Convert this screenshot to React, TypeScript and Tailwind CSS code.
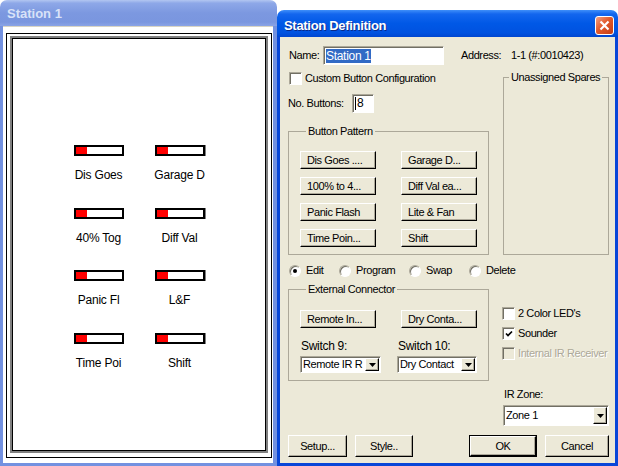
import React from "react";

const ui =
  "font-['Liberation_Sans',Arial,sans-serif] text-[11px] leading-[13px] tracking-[-0.4px] text-black";
const raised =
  "border border-t-white border-l-white border-r-black border-b-black shadow-[inset_-1px_-1px_0_#aca899]";
const sunken =
  "border border-t-[#aca899] border-l-[#aca899] border-r-white border-b-white shadow-[inset_1px_1px_0_#716f64]";

const leds = [
  ["Dis Goes", "Garage D"],
  ["40% Tog", "Diff Val"],
  ["Panic Fl", "L&F"],
  ["Time Poi", "Shift"],
];

const patternButtons = [
  "Dis Goes ....",
  "Garage D...",
  "100% to 4...",
  "Diff Val ea...",
  "Panic Flash",
  "Lite & Fan",
  "Time Poin...",
  "Shift",
];

const Led = ({ label, shadow }: { label: string; shadow?: boolean }) => (
  <div className="flex w-[50px] flex-col items-center">
    <div
      className={`flex h-[11px] w-[50px] border-2 border-black bg-white ${
        shadow ? "shadow-[1px_0_0_#808080]" : ""
      }`}
    >
      <div className="w-[11px] bg-[#ff0000]" />
    </div>
    <span className="mt-[12px] whitespace-nowrap text-[12px] leading-[14px] tracking-[-0.2px]">
      {label}
    </span>
  </div>
);

const StationWindow = () => (
  <div className="flex h-[466px] w-[277px] shrink-0 flex-col">
    <div className="flex h-[26px] items-center rounded-t-[7px] bg-[linear-gradient(to_bottom,#b2c6f1_0%,#8ea8e8_12%,#7c98e0_50%,#7a96df_85%,#8aa4e6_100%)] pl-[7px]">
      <span className="text-[13px] font-bold tracking-[0px] text-[#d8e2f8]">
        Station 1
      </span>
    </div>
    <div className="flex flex-1 flex-col border-l-[3px] border-r-[4px] border-b-[3px] border-[#7391e0]">
      <div className="h-px bg-[#d8d4c4]" />
      <div className="flex flex-1 flex-col bg-white pl-[3px] pr-[1px] pt-[6px] pb-[5px]">
        <div className="flex flex-1 flex-col border border-black px-[3px] pt-[2px] pb-[4px]">
          <div className="flex flex-1 flex-col border-2 border-[#808080]">
            <div className="flex flex-1 justify-center border border-black bg-white pt-[106px]">
              <div className="grid h-fit grid-cols-[50px_50px] gap-x-[31px] gap-y-[25.7px]">
                {leds.map(([a, b]) => (
                  <React.Fragment key={a}>
                    <Led label={a} />
                    <Led label={b} shadow />
                  </React.Fragment>
                ))}
              </div>
            </div>
          </div>
        </div>
      </div>
    </div>
  </div>
);

const Checkbox = ({ checked, disabled }: { checked?: boolean; disabled?: boolean }) => (
  <div
    className={`flex h-[13px] w-[13px] shrink-0 items-center justify-center ${sunken} ${
      disabled ? "bg-[#ece9d8]" : "bg-white"
    }`}
  >
    {checked && (
      <svg width="8" height="8" viewBox="0 0 8 8">
        <path d="M1 3.5 L3 5.5 L7 1.5" stroke="black" strokeWidth="1.7" fill="none" />
      </svg>
    )}
  </div>
);

const Radio = ({ checked }: { checked?: boolean }) => (
  <div className="flex h-[12px] w-[12px] shrink-0 items-center justify-center rounded-full border border-t-[#aca899] border-l-[#aca899] border-r-white border-b-white bg-white shadow-[inset_1px_1px_0_#716f64]">
    {checked && <div className="h-[4px] w-[4px] rounded-full bg-black" />}
  </div>
);

const Arrow = () => (
  <svg width="7" height="4" viewBox="0 0 7 4">
    <path d="M0 0 H7 L3.5 4 Z" fill="black" />
  </svg>
);

const Select = ({ value, className }: { value: string; className: string }) => (
  <div className={`flex items-stretch bg-white ${sunken} ${className}`}>
    <span className="flex min-w-0 flex-1 items-center whitespace-nowrap pl-[2px]">
      {value}
    </span>
    <span className={`m-px flex w-[14px] shrink-0 items-center justify-center bg-[#ece9d8] ${raised}`}>
      <Arrow />
    </span>
  </div>
);

const PushButton = ({ children, className }: { children: React.ReactNode; className: string }) => (
  <div className={`flex items-center bg-[#ece9d8] ${raised} ${className}`}>{children}</div>
);

const Dialog = () => (
  <div className="mt-[10px] flex h-[456px] w-[341px] shrink-0 flex-col">
    <div className="flex h-[27px] items-start justify-between rounded-t-[7px] bg-[linear-gradient(to_bottom,#3f8ff9_0%,#1366ee_15%,#0058e6_50%,#0052e0_85%,#0046d0_100%)] pl-[7px] pr-[4px]">
      <span className="mt-[8px] text-[13px] font-bold leading-[15px] tracking-[-0.3px] text-white [text-shadow:1px_1px_0_#0a2a8a]">
        Station Definition
      </span>
      <div className="mt-[6px] flex h-[19px] w-[19px] items-center justify-center rounded-[3px] border border-white bg-[linear-gradient(135deg,#f3a184_0%,#e25a2c_45%,#c43d16_100%)]">
        <svg width="11" height="11" viewBox="0 0 11 11">
          <path d="M1.5 1.5 L9.5 9.5 M9.5 1.5 L1.5 9.5" stroke="white" strokeWidth="2.2" />
        </svg>
      </div>
    </div>
    <div className="flex flex-1 flex-col border-x-[3px] border-b-[3px] border-[#0846d8] bg-[#ece9d8] pl-[8px] pr-[6px] pt-[9px]">
      {/* name / address */}
      <div className="flex h-[19px] items-center">
        <span className="ml-px w-[34px]">Name:</span>
        <div className={`flex h-[19px] w-[121px] items-center bg-white pl-[2px] ${sunken}`}>
          <span className="bg-[#316ac5] text-[12px] leading-[14px] tracking-[-0.3px] text-white">
            Station 1
          </span>
        </div>
        <span className="ml-[17px] w-[50px]">Address:</span>
        <span>1-1 (#:0010423)</span>
      </div>

      {/* upper columns */}
      <div className="flex">
        <div className="flex w-[201px] flex-col">
          <div className="mt-[7px] flex h-[13px] items-center">
            <div className="ml-px">
              <Checkbox />
            </div>
            <span className="ml-[3px]">Custom Button Configuration</span>
          </div>
          <div className="mt-[9px] flex h-[19px] items-center">
            <span className="w-[64px]">No. Buttons:</span>
            <div className={`flex h-[19px] w-[22px] items-center bg-white pl-[2px] ${sunken}`}>
              <span className="mr-px h-[13px] w-px bg-black" />
              <span className="text-[12px]">8</span>
            </div>
          </div>
          <fieldset className="mt-[12px] border border-[#aca899] pl-[11px] pt-[13px] pb-[7px]">
            <legend className="ml-[6px] px-[2px]">Button Pattern</legend>
            <div className="grid grid-cols-[76px_76px] gap-x-[25px] gap-y-[8px]">
              {patternButtons.map((b) => (
                <PushButton key={b} className="h-[18px] pl-[6px]">
                  {b}
                </PushButton>
              ))}
            </div>
          </fieldset>
        </div>
        <div className="ml-[14px] flex w-[106px] flex-col">
          <fieldset className="mt-[6px] h-[184px] border border-[#aca899]">
            <legend className="ml-[5px] px-[2px]">Unassigned Spares</legend>
          </fieldset>
        </div>
      </div>

      {/* mode radios */}
      <div className="mt-[9px] flex h-[13px] items-center">
        <div className="ml-px flex w-[50px] items-center">
          <Radio checked />
          <span className="ml-[5px]">Edit</span>
        </div>
        <div className="flex w-[70px] items-center">
          <Radio />
          <span className="ml-[5px]">Program</span>
        </div>
        <div className="flex w-[60px] items-center">
          <Radio />
          <span className="ml-[5px]">Swap</span>
        </div>
        <div className="flex items-center">
          <Radio />
          <span className="ml-[5px]">Delete</span>
        </div>
      </div>

      {/* lower columns */}
      <div className="flex items-start">
        <fieldset className="mt-[6px] w-[201px] border border-[#aca899] pl-[11px] pt-[14px] pb-[7px]">
          <legend className="ml-[6px] px-[2px]">External Connector</legend>
          <div className="grid grid-cols-[76px_76px] gap-x-[25px]">
            <PushButton className="h-[18px] pl-[6px]">Remote In...</PushButton>
            <PushButton className="h-[18px] pl-[6px]">Dry Conta...</PushButton>
          </div>
          <div className="mt-[12px] flex">
            <div className="flex w-[81px] flex-col">
              <span className="pl-px text-[12px] leading-[13px] tracking-[-0.3px]">Switch 9:</span>
              <Select value="Remote IR R" className="mt-[3px] h-[17px] w-[81px]" />
            </div>
            <div className="ml-[16px] flex w-[80px] flex-col">
              <span className="pl-px text-[12px] leading-[13px] tracking-[-0.3px]">Switch 10:</span>
              <Select value="Dry Contact" className="mt-[3px] h-[17px] w-[80px]" />
            </div>
          </div>
        </fieldset>
        <div className="ml-[14px] flex w-[106px] flex-col">
          <div className="-ml-px mt-[30px] flex h-[13px] items-center">
            <Checkbox />
            <span className="ml-[3px]">2 Color LED's</span>
          </div>
          <div className="-ml-px mt-[7px] flex h-[13px] items-center">
            <Checkbox checked />
            <span className="ml-[3px]">Sounder</span>
          </div>
          <div className="-ml-px mt-[7px] flex h-[13px] items-center">
            <Checkbox disabled />
            <span className="ml-[3px] text-[#aca899] [text-shadow:1px_1px_0_#ffffff]">
              Internal IR Receiver
            </span>
          </div>
          <span className="mt-[28px] pl-px">IR Zone:</span>
          <Select value="Zone 1" className="mt-[4px] h-[21px] w-[106px]" />
        </div>
      </div>

      {/* bottom buttons */}
      <div className="mt-[9px] flex">
        <PushButton className="h-[22px] w-[59px] justify-center">Setup...</PushButton>
        <PushButton className="ml-[8px] h-[22px] w-[58px] justify-center">Style..</PushButton>
        <div className="ml-auto border border-black">
          <PushButton className="h-[20px] w-[66px] justify-center">OK</PushButton>
        </div>
        <PushButton className="ml-[8px] h-[22px] w-[64px] justify-center">Cancel</PushButton>
      </div>
    </div>
  </div>
);

export default function App() {
  return (
    <div className={`flex h-[466px] w-[618px] overflow-hidden bg-white ${ui}`}>
      <StationWindow />
      <Dialog />
    </div>
  );
}
